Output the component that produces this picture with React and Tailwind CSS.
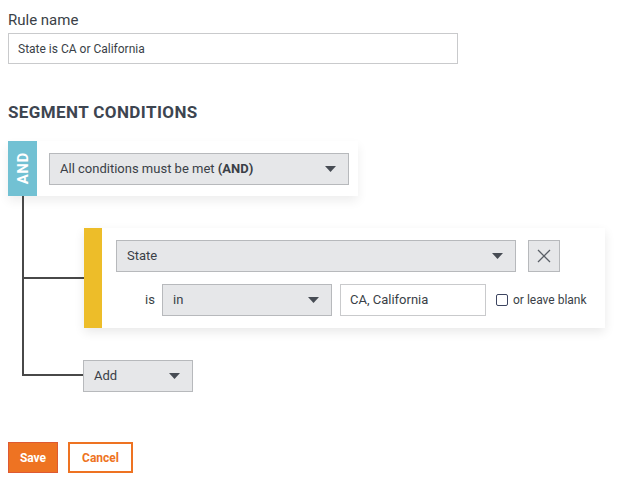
import React from "react";

function Caret() {
  return (
    <svg width="11" height="6" viewBox="0 0 11 6" className="shrink-0">
      <path d="M0 0 H11 L5.5 6 Z" fill="#474c54" />
    </svg>
  );
}

function Select({ label, className, children }) {
  return (
    <div
      className={`flex items-center justify-between border border-[#b7b9bc] bg-[#e6e7e9] pl-[10px] pr-[12px] text-[13px] text-[#3a3f47] ${className}`}
    >
      <span>{children || label}</span>
      <Caret />
    </div>
  );
}

export default function App() {
  return (
    <div className="min-h-[483px] bg-white pl-[8px] pt-[10px] text-[#3a3f47] [font-family:Roboto,'Liberation_Sans',sans-serif]">
      {/* rule name */}
      <label className="block text-[15px] leading-[20px]">Rule name</label>
      <div className="mt-[3px] flex h-[31px] w-[450px] items-center border border-[#c9cacc] pl-[9px] text-[12px]">
        State is CA or California
      </div>

      <h2 className="mt-[37px] text-[17px] font-bold uppercase leading-[22px] tracking-[0.4px] text-[#3d4550]">
        Segment conditions
      </h2>

      {/* group header */}
      <div className="mt-[18px] flex h-[55px] w-[350px] items-center bg-white shadow-[0_5px_10px_rgba(0,0,0,0.07)]">
        <div className="flex h-full w-[29px] items-center justify-center bg-[#72c1d3]">
          <span className="-rotate-90 text-[15px] font-bold tracking-[0.5px] text-white">AND</span>
        </div>
        <Select className="ml-[12px] h-[32px] w-[300px]">
          <span>
            All conditions must be met <b>(AND)</b>
          </span>
        </Select>
      </div>

      {/* tree */}
      <div className="ml-[14px]">
        <div className="border-l-2 border-[#484848] pt-[32px]">
          <div className="flex items-center">
            <div className="h-[2px] w-[60px] bg-[#484848]" />
            <div className="flex h-[100px] w-[521px] bg-white shadow-[0_4px_10px_rgba(0,0,0,0.09)]">
              <div className="w-[18px] bg-[#edbd29]" />
              <div className="flex flex-col gap-[12px] pl-[14px] pt-[12px]">
                <div className="flex items-center gap-[12px]">
                  <Select className="h-[32px] w-[400px]" label="State" />
                  <button className="flex h-[32px] w-[32px] items-center justify-center border border-[#b7b9bc] bg-[#e6e7e9]">
                    <svg width="14" height="14" viewBox="0 0 14 14">
                      <path d="M1 1 L13 13 M13 1 L1 13" stroke="#5a5f66" strokeWidth="1.3" />
                    </svg>
                  </button>
                </div>
                <div className="flex items-center">
                  <span className="ml-[29px] w-[17px] text-[13px]">is</span>
                  <Select className="h-[32px] w-[170px]" label="in" />
                  <div className="ml-[8px] flex h-[32px] w-[146px] items-center border border-[#c9cacc] bg-white pl-[9px] text-[13px]">
                    CA, California
                  </div>
                  <span className="ml-[10px] h-[12px] w-[12px] rounded-[2px] border-[1.5px] border-[#3d4560]" />
                  <span className="ml-[5px] text-[12px]">or leave blank</span>
                </div>
              </div>
            </div>
          </div>
        </div>
        <div className="flex items-end">
          <div className="h-[48px] w-[61px] border-b-2 border-l-2 border-[#484848]" />
          <Select className="mb-[-16px] h-[32px] w-[110px]" label="Add" />
        </div>
      </div>

      {/* actions */}
      <div className="mt-[66px] flex gap-[10px]">
        <button className="h-[31px] w-[50px] border border-[#de5a32] bg-[#ee7322] text-[12px] font-bold text-white">
          Save
        </button>
        <button className="h-[31px] w-[65px] border-2 border-[#ee7322] bg-white text-[12px] font-bold text-[#ee7322]">
          Cancel
        </button>
      </div>
    </div>
  );
}
